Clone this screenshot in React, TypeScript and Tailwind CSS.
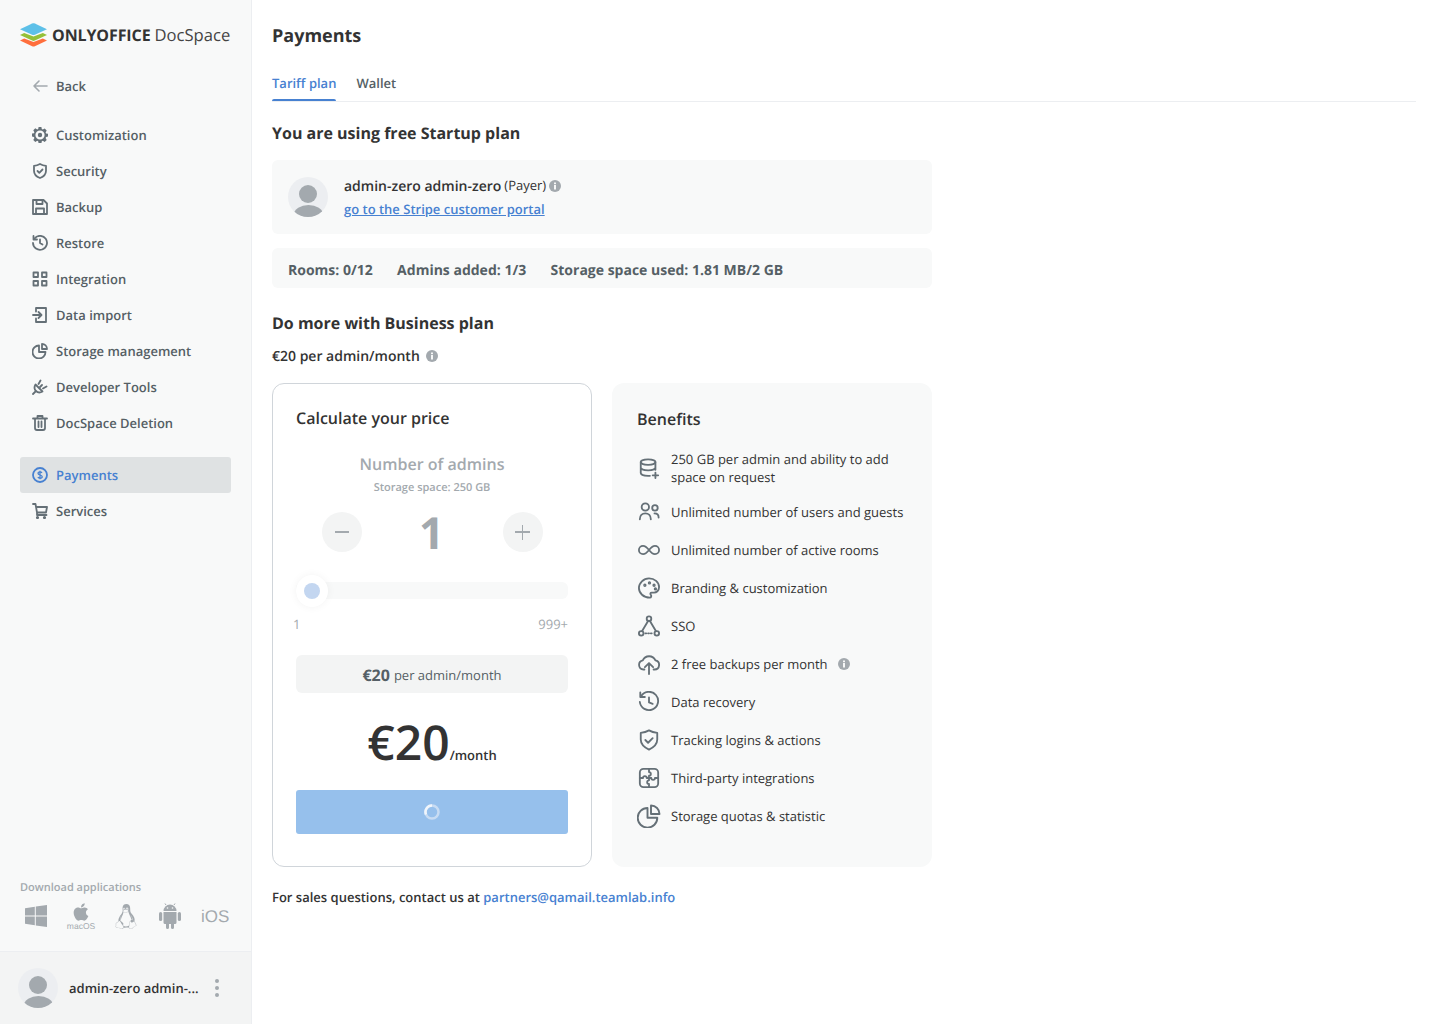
import React from "react";
import { FaApple, FaLinux } from "react-icons/fa";

type IP = { className?: string };
const S = ({ className = "", size = 16, children, view = 16, sw = 1.8 }: { className?: string; size?: number; children: React.ReactNode; view?: number; sw?: number }) => (
  <svg width={size} height={size} viewBox={`0 0 ${view} ${view}`} fill="none" stroke="currentColor" strokeWidth={sw} strokeLinecap="round" strokeLinejoin="round" className={"shrink-0 " + className}>{children}</svg>
);

const Back = () => <S sw={1.6}><path d="M15 8H2M7 3 2 8l5 5" /></S>;
const Gear = () => (
  <svg width="16" height="16" viewBox="0 0 16 16" className="shrink-0">
    <path fill="currentColor" fillRule="evenodd" d="M6.600 0h2.800l.4 2.100 1 .5 1.900-1.100 2 2-1.100 1.900.5 1 2 .4v2.800l-2 .4-.5 1 1.100 1.900-2 2-1.900-1.100-1 .5-.4 2.100H6.600l-.4-2.100-1-.5-1.900 1.100-2-2 1.100-1.900-.5-1-2-.4V6.600l2-.4.5-1-1.100-1.900 2-2 1.900 1.100 1-.5zM8 3.400a4.600 4.600 0 1 0 0 9.200 4.600 4.600 0 0 0 0-9.200z" />
    <circle cx="8" cy="8" r="2.200" fill="currentColor" />
  </svg>
);
const Shield = () => <S><path d="M8 1c2 1.200 4 1.700 6 1.800v5c0 3.400-2.400 5.900-6 7.200-3.600-1.300-6-3.800-6-7.200v-5C4 2.700 6 2.200 8 1z" /><path d="m5.500 8 1.800 1.800 3.200-3.300" /></S>;
const Save = () => <S><path d="M1 1h10.500L15 4.500V15H1z" /><path d="M4.500 1v4h6V1M4 15V9.500h8V15" /></S>;
const Restore = () => <S><path d="M2.500 3.500A7 7 0 1 1 1 8" /><path d="M1.500 1v3.500H5M8 4.500V8l2.500 1.500" /></S>;
const Grid = () => <S sw={1.8}><rect x="1.500" y="1.500" width="4.500" height="4.500" /><rect x="10" y="1.500" width="4.500" height="4.500" /><rect x="1.500" y="10" width="4.500" height="4.500" /><rect x="10" y="10" width="4.500" height="4.500" /></S>;
const Import = () => <S><path d="M4 4.500V1h10v14H4v-3.500" /><path d="M1 8h8M6.500 5 9.500 8l-3 3" /></S>;
const Pie = () => <S><path d="M7 2.500A6.500 6.500 0 1 0 13.500 9H7z" /><path d="M10 1v5h5A5 5 0 0 0 10 1z" /></S>;
const Dev = () => <S><path d="M3.500 5.500 10.500 12.500c-2.500 1.500-5 1-6.500-.5S2 8 3.500 5.500z" /><path d="m6.500 5 2-3.500M11 9.500l3.500-2M3.500 12.500 1 15M8 8l2-2" /></S>;
const Trash = () => <S><path d="M1 3.500h14M5.500 3.500V1h5v2.500M3 3.500v9.500a2 2 0 0 0 2 2h6a2 2 0 0 0 2-2V3.500M6.500 6.500V12M9.500 6.500V12" /></S>;
const Dollar = () => (
  <svg width="16" height="16" viewBox="0 0 16 16" className="shrink-0">
    <circle cx="8" cy="8" r="7" fill="none" stroke="currentColor" strokeWidth="1.800" />
    <path d="M10 5.800c-.5-.7-1.200-1-2-1-1.100 0-2 .5-2 1.500 0 2.200 4.200 1.200 4.200 3.400 0 1-.9 1.500-2.200 1.500-.9 0-1.700-.4-2.200-1M8 3.800v8.400" fill="none" stroke="currentColor" strokeWidth="1.300" />
  </svg>
);
const Cart = () => <S><path d="M1 1h2.500l1.500 8.500h9l1-5.500H4M5 9.500v2.500h9.500" /><circle cx="5.500" cy="14.500" r=".7" fill="currentColor" /><circle cx="12.500" cy="14.500" r=".7" fill="currentColor" /></S>;

const Info = ({ className = "" }: IP) => (
  <svg width="12" height="12" viewBox="0 0 12 12" className={"shrink-0 " + className}>
    <circle cx="6" cy="6" r="6" fill="#a3a9ae" />
    <rect x="5.100" y="5" width="1.800" height="4.500" fill="#fff" />
    <rect x="5.100" y="2.500" width="1.800" height="1.700" fill="#fff" />
  </svg>
);

const Avatar = () => (
  <div className="relative w-10 h-10 rounded-full bg-[#eceef1] overflow-hidden shrink-0">
    <div className="absolute left-[11px] top-[8px] w-[18px] h-[18px] rounded-full bg-[#a3a9ae]" />
    <div className="absolute left-[5.500px] top-[28px] w-[29px] h-[18px] rounded-[50%] bg-[#a3a9ae]" />
  </div>
);

const Logo = () => (
  <svg width="27" height="24" viewBox="1 0 26 24" preserveAspectRatio="none" className="shrink-0">
    <path d="M1 17.500 5 15.500l9 3.500 9-3.500 4 2-11.700 5.800c-.9.400-1.700.4-2.600 0z" fill="#ff6f3d" />
    <path d="M1 12 5 10l9 3.600L23 10l4 2-11.700 5.600c-.9.400-1.700.4-2.600 0z" fill="#95c038" />
    <path d="M12.700.5c.9-.4 1.700-.4 2.600 0L27 6.200l-11.700 5.600c-.9.400-1.700.4-2.600 0L1 6.200z" fill="#5dc0e8" />
  </svg>
);

const Windows = () => (
  <svg width="22" height="22" viewBox="0 0 22 22" fill="currentColor" className="shrink-0">
    <path d="M0 3.200 9.800 1.700v8.800H0z" />
    <path d="M10.800 1.500 22 0v10.500H10.800z" />
    <path d="M0 11.500h9.800v8.800L0 18.800z" />
    <path d="M10.800 11.500H22V22l-11.200-1.500z" />
  </svg>
);

const Android = () => (
  <svg width="22" height="26" viewBox="0 0 22 26" fill="currentColor" className="shrink-0">
    <path d="M4.500 8a6.500 6.500 0 0 1 13 0z" />
    <path d="M7 2 6 .5M15 2l1-1.500" stroke="currentColor" strokeWidth="1" fill="none" />
    <path d="M4.500 9h13v10.500a1.500 1.500 0 0 1-1.500 1.500h-1v3.500a1.500 1.500 0 0 1-3 0V21h-2v3.500a1.500 1.500 0 0 1-3 0V21H6a1.500 1.500 0 0 1-1.500-1.500z" />
    <rect x="0" y="9" width="3.200" height="9" rx="1.600" />
    <rect x="18.800" y="9" width="3.200" height="9" rx="1.600" />
    <circle cx="8.500" cy="5" r=".8" fill="#f8f9f9" />
    <circle cx="13.500" cy="5" r=".8" fill="#f8f9f9" />
  </svg>
);

const nav1: [string, React.ReactNode][] = [
  ["Customization", <Gear />],
  ["Security", <Shield />],
  ["Backup", <Save />],
  ["Restore", <Restore />],
  ["Integration", <Grid />],
  ["Data import", <Import />],
  ["Storage management", <Pie />],
  ["Developer Tools", <Dev />],
  ["DocSpace Deletion", <Trash />],
];

const NavRow = ({ label, icon, active = false }: { label: string; icon: React.ReactNode; active?: boolean }) => (
  <div className={"h-9 px-3 flex items-center gap-2 rounded-[3px] text-[13px] font-semibold " + (active ? "bg-[#dfe2e3] text-[#4781d1]" : "text-[#657077]")}>
    {icon}
    <span className={"pt-[2px] " + (active ? "" : "text-[#555f65]")}>{label}</span>
  </div>
);

const B = ({ children }: { children: React.ReactNode }) => (
  <span className="w-6 h-6 flex items-center justify-center shrink-0">
    <svg width="22" height="22" viewBox="0 0 24 24" fill="none" stroke="currentColor" strokeWidth="2" strokeLinecap="round" strokeLinejoin="round">{children}</svg>
  </span>
);

const benefits: [React.ReactNode, React.ReactNode][] = [
  [<B><ellipse cx="11" cy="5.500" rx="8" ry="3" /><path d="M3 5.500v12c0 1.700 3.500 3 8 3h2M3 11.500c0 1.700 3.500 3 8 3s8-1.300 8-3M19 5.500V14M19 17v6M16 20h6" /></B>, <>250 GB per admin and ability to add<br />space on request</>],
  [<B><circle cx="8" cy="6.500" r="4" /><circle cx="18.500" cy="7.500" r="3" /><path d="M2 20c0-4 2.500-6.500 6-6.500s6 2.500 6 6.500M18 13.500c2.700 0 4.500 1.700 4.500 4.500" /></B>, "Unlimited number of users and guests"],
  [<B><path d="M12 12c-2-2.500-3.500-4.500-6.500-4.500a4.500 4.500 0 0 0 0 9c3 0 4.500-2 6.500-4.500zm0 0c2 2.500 3.500 4.500 6.500 4.500a4.500 4.500 0 0 0 0-9c-3 0-4.500 2-6.500 4.500z" /></B>, "Unlimited number of active rooms"],
  [<B><path d="M12 1.500c6 0 11 4 11 9.500 0 4-3 6-5.500 6H15c-1.500 0-2 1.500-1 2.500s.3 3-1 3C6 22.500 1 17.500 1 12S6 1.500 12 1.500z" /><circle cx="7.500" cy="9" r=".8" /><circle cx="12.500" cy="6.500" r=".8" /><circle cx="17.500" cy="9" r=".8" /><circle cx="19" cy="13" r=".8" /></B>, "Branding & customization"],
  [<B><circle cx="12" cy="4" r="2.500" /><circle cx="3.500" cy="20" r="2.500" /><circle cx="20.500" cy="20" r="2.500" /><path d="M11 6.500 4.500 17.500M13 6.500l6.500 11" /><path d="M8 20h8" strokeDasharray="1 2" /></B>, "SSO"],
  [<B><path d="M7 18H6a5 5 0 0 1-.8-9.900A7.500 7.500 0 0 1 19 8.100 5 5 0 0 1 18 18h-1" /><path d="M12 23V11M7.500 15.500 12 11l4.500 4.500" /></B>, <span className="flex items-center gap-[10px]">2 free backups per month <Info /></span>],
  [<B><path d="M3.500 5.500A10 10 0 1 1 2 12" /><path d="M2.500 1.500v5H7.500M12 7v5.500l4 1.500" /></B>, "Data recovery"],
  [<B><path d="M12 1.500c2.800 1.700 5.800 2.500 9 2.800v7.200c0 5-3.700 8.500-9 11-5.300-2.500-9-6-9-11V4.300c3.200-.3 6.200-1.100 9-2.800z" /><path d="m8 12 3 3 5-5" /></B>, "Tracking logins & actions"],
  [<B><rect x="2" y="2" width="20" height="20" rx="4" /><path d="M2 12h3.500a2 2 0 0 1 4 0H12M12 12h2.500a2 2 0 0 0 4 0H22M12 2v3.500a2 2 0 0 1 0 4V12M12 12v2.500a2 2 0 0 0 0 4V22" /></B>, "Third-party integrations"],
  [<svg width="24" height="24" viewBox="0 0 24 24" fill="none" stroke="currentColor" strokeWidth="1.900" strokeLinejoin="round" className="shrink-0"><path d="M10.500 4a9.800 9.800 0 1 0 9.800 9.800h-9.800z" /><path d="M14 1.500V10h8.500A8.500 8.500 0 0 0 14 1.500z" /></svg>, "Storage quotas & statistic"],
];

export default function App() {
  return (
    <div className="flex w-[1440px] h-[1024px] overflow-hidden bg-white font-['Open_Sans',sans-serif] text-[#333] [text-rendering:geometricPrecision]">
      <aside className="w-[252px] shrink-0 h-full flex flex-col bg-[#f8f9f9] border-r border-[#eceef1]">
        <div className="px-5 mt-[23px] flex items-center h-6">
          <Logo />
          <span className="ml-[5px] text-[16px] leading-[24px] font-bold tracking-[-0.1px] text-[#333] whitespace-nowrap">ONLYOFFICE</span>
          <span className="ml-[4px] text-[16.600px] leading-[24px] text-[#444] whitespace-nowrap">DocSpace</span>
        </div>
        <nav className="px-5 flex-1 flex flex-col mt-[21px]">
          <NavRow label="Back" icon={<span className="text-[#a3a9ae]"><Back /></span>} />
          <div className="mt-[13px] flex flex-col">
            {nav1.map(([l, i]) => <NavRow key={l} label={l} icon={i} />)}
          </div>
          <div className="mt-4 flex flex-col">
            <NavRow label="Payments" icon={<Dollar />} active />
            <NavRow label="Services" icon={<Cart />} />
          </div>
        </nav>
        <div className="px-5 pb-[21px]">
          <div className="text-[11px] leading-4 font-semibold text-[#a3a9ae]">Download applications</div>
          <div className="mt-[6px] h-[28px] flex items-center text-[#a3a9ae] pl-[5px]">
            <Windows />
            <div className="ml-5 w-[28px] flex flex-col items-center">
              <FaApple size={20} className="-mt-[1px]" />
              <span className="text-[8.500px] leading-[8px] font-['Liberation_Sans',sans-serif]">macOS</span>
            </div>
            <span className="ml-5 w-[22px] flex justify-center"><FaLinux size={27} /></span>
            <span className="ml-[22px]"><Android /></span>
            <span className="ml-5 pt-[2px] text-[17px] leading-6 font-['Liberation_Sans',sans-serif]">iOS</span>
          </div>
        </div>
        <div className="h-[73px] shrink-0 bg-[#f3f4f4] border-t border-[#eceef1] flex items-center pl-[18px]">
          <Avatar />
          <span className="ml-[11px] pt-[2px] w-[136px] text-[13px] font-semibold text-[#333] whitespace-nowrap">admin-zero admin-...</span>
          <div className="ml-[10px] flex flex-col gap-[3px]">
            <span className="w-1 h-1 rounded-full bg-[#a3a9ae]" />
            <span className="w-1 h-1 rounded-full bg-[#a3a9ae]" />
            <span className="w-1 h-1 rounded-full bg-[#a3a9ae]" />
          </div>
        </div>
      </aside>

      <main className="flex-1 pl-5 pr-6">
        <h1 className="pt-[24px] text-[18px] leading-[25px] font-bold text-[#333]">Payments</h1>
        <div className="mt-[14px] h-[39px] flex gap-5 border-b border-[#eceef1] text-[13px] font-semibold">
          <div className="relative h-[38px] flex items-center pt-[3px] text-[#4781d1]">
            Tariff plan
            <span className="absolute left-0 right-0 bottom-[0px] h-[2px] rounded-t bg-[#4781d1]" />
          </div>
          <div className="h-[38px] flex items-center pt-[3px] text-[#555f65]">Wallet</div>
        </div>

        <div className="w-[660px]">
          <h2 className="mt-[20px] text-[16px] leading-[22px] font-bold text-[#333]">You are using free Startup plan</h2>
          <div className="mt-[16px] h-[74px] rounded-md bg-[#f8f9f9] flex items-center px-4">
            <Avatar />
            <div className="ml-4">
              <div className="flex items-center h-[20px] pt-[2px]">
                <span className="text-[14px] font-semibold text-[#333]">admin-zero admin-zero</span>
                <span className="ml-[3px] text-[13px] text-[#333]">(Payer)</span>
                <Info className="ml-[3px]" />
              </div>
              <a className="mt-[4px] block text-[13px] leading-[20px] font-semibold text-[#4781d1] underline">go to the Stripe customer portal</a>
            </div>
          </div>
          <div className="mt-[14px] h-10 pt-[4px] rounded-md bg-[#f8f9f9] flex items-center gap-[24.400px] px-4 text-[14px] font-bold text-[#555f65]">
            <span>Rooms: 0/12</span>
            <span>Admins added: 1/3</span>
            <span>Storage space used: 1.81 MB/2 GB</span>
          </div>
          <h2 className="mt-[24px] text-[16px] leading-[22px] font-bold text-[#333]">Do more with Business plan</h2>
          <div className="mt-[10px] h-[23px] flex items-center gap-[6px] text-[14px] font-semibold text-[#333]">
            <span className="pt-[2px]">€20 per admin/month</span> <Info />
          </div>

          <div className="mt-[16px] flex gap-5">
            <section className="w-[320px] h-[484px] rounded-xl border border-[#d0d5da] px-[23px] pt-[22px]">
              <div className="text-[16px] leading-[24px] font-semibold text-[#333]">Calculate your price</div>
              <div className="mt-[22px] text-center text-[16px] leading-[24px] font-semibold text-[#a3a9ae]">Number of admins</div>
              <div className="text-center text-[11px] leading-[16px] font-semibold text-[#a3a9ae] mt-[4px]">Storage space: 250 GB</div>
              <div className="mt-[16px] flex items-center justify-center">
                <div className="w-10 h-10 rounded-full bg-[#f3f4f4] flex items-center justify-center text-[#a3a9ae]">
                  <span className="w-[14px] h-[1.500px] bg-current" />
                </div>
                <div className="ml-[49px] w-[42px] text-center text-[44px] leading-10 font-bold text-[#a3a9ae]">1</div>
                <div className="ml-[50px] relative w-10 h-10 rounded-full bg-[#f3f4f4] flex items-center justify-center text-[#a3a9ae]">
                  <span className="w-[15px] h-[1.500px] bg-current" />
                  <span className="absolute w-[1.500px] h-[15px] bg-current" />
                </div>
              </div>
              <div className="relative mt-[30px] h-[17px] rounded-md bg-[#f8f9f9]">
                <span className="absolute left-0 top-[-7.500px] w-8 h-8 rounded-full bg-white shadow-[0_0_8px_rgba(4,15,27,0.05)] flex items-center justify-center">
                  <span className="w-4 h-4 rounded-full bg-[#c3d6f0]" />
                </span>
              </div>
              <div className="mt-[16px] flex justify-between text-[13px] leading-[18px] text-[#a3a9ae]">
                <span className="-ml-[3px]">1</span><span>999+</span>
              </div>
              <div className="mt-[22px] h-[38px] pt-[2px] rounded-md bg-[#f3f4f4] flex items-center justify-center text-[#555f65]">
                <span className="text-[16px] font-bold">€20</span>
                <span className="ml-[4px] text-[13px] mt-[1px]">per admin/month</span>
              </div>
              <div className="mt-[17px] h-[66px] flex items-baseline justify-center">
                <span className="text-[48px] leading-[66px] font-semibold text-[#333]">€20</span>
                <span className="text-[13px] font-semibold text-[#333]">/month</span>
              </div>
              <div className="mt-[14px] h-[44px] rounded-[3px] bg-[#96c0ec] flex items-center justify-center">
                <svg width="16" height="16" viewBox="0 0 16 16" fill="none" strokeWidth="2.500">
                  <circle cx="8" cy="8" r="6.500" stroke="#c8dcf3" />
                  <path d="M2 10.500A6.500 6.500 0 0 1 8 1.500" stroke="#f1f6fc" />
                </svg>
              </div>
            </section>

            <section className="w-[320px] h-[484px] rounded-xl bg-[#f8f9f9] pl-[25px] pr-[20px] pt-[24px]">
              <div className="text-[16px] leading-[24px] font-semibold text-[#333]">Benefits</div>
              <div className="mt-[19px] flex flex-col gap-[14px]">
                {benefits.map(([ic, t], i) => (
                  <div key={i} className="flex items-center gap-[10px] min-h-[24px] text-[#657077]">
                    {ic}
                    <div className="text-[13px] leading-[18px] text-[#333]">{t}</div>
                  </div>
                ))}
              </div>
            </section>
          </div>

          <div className="mt-[20px] text-[13px] leading-[20px] font-semibold text-[#333]">
            For sales questions, contact us at <span className="text-[#4781d1]">partners@qamail.teamlab.info</span>
          </div>
        </div>
      </main>
    </div>
  );
}
